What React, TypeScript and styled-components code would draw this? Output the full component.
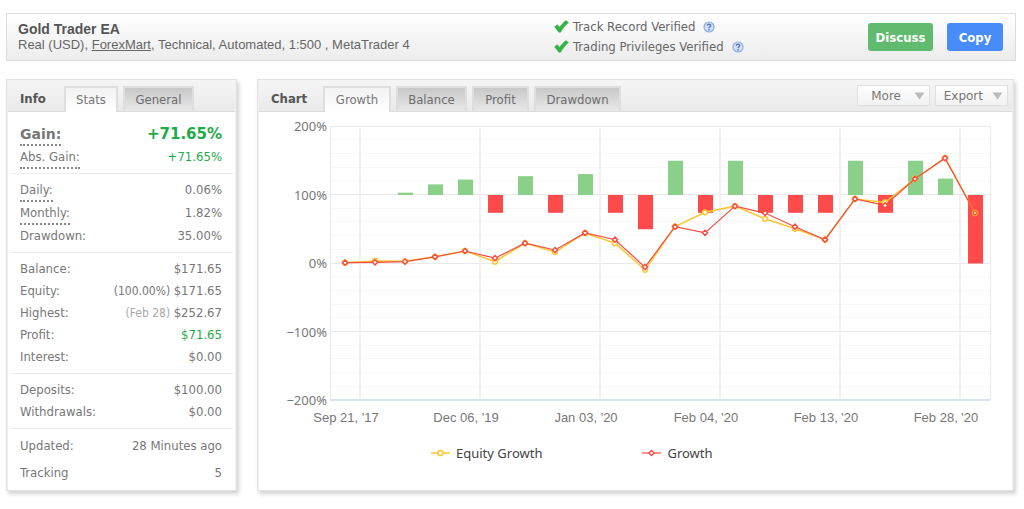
import React, { useState } from "react";
import styled, { createGlobalStyle } from "styled-components";

const UI = `"DejaVu Sans Condensed", "Noto Sans", sans-serif`;
const WIDE = `"DejaVu Sans", sans-serif`;
const ARIAL = `"Liberation Sans", Arial, sans-serif`;
const HUMANIST = `"Noto Sans", sans-serif`;

const GlobalStyle = createGlobalStyle`
  * { box-sizing: border-box; }
  body { margin: 0; background: #fff; color: #777; font: 13px/16px ${UI}; }
  button { font: inherit; color: inherit; cursor: pointer; }
  dl, dt, dd, h1, h2, p, ul { margin: 0; padding: 0; }
`;

const Page = styled.main`
  display: flex;
  flex-direction: column;
  gap: 18px;
  padding: 13px 8px 19px 6px;
`;

const Banner = styled.header`
  display: flex;
  align-items: center;
  height: 48px;
  padding: 0 12px 0 11px;
  border: 1px solid #dcdcdc;
  background: linear-gradient(#fff, #ececec);
`;

const Account = styled.div`
  flex: 1;
  color: #666;
  font: 13px/16px ${ARIAL};
`;

const AccountName = styled.h1`
  color: #555;
  font: bold 14px/16px ${ARIAL};
`;

const BrokerLink = styled.a`
  color: inherit;
`;

const Checks = styled.ul`
  width: 314px;
  list-style: none;
  color: #666;
`;

const Check = styled.li`
  display: flex;
  align-items: center;
  gap: 4px;
  height: 20px;
`;

const HelpIcon = styled.svg`
  margin-left: 4px;
`;

const Actions = styled.div`
  display: flex;
  gap: 14px;
`;

const ActionButton = styled.button<{ $color: string; $width: number }>`
  width: ${(p) => p.$width}px;
  height: 28px;
  padding: 2px 0 0;
  border: 0;
  border-radius: 3px;
  background: ${(p) => p.$color};
  color: #fff;
  font-size: 13px;
  font-weight: bold;
`;

const Columns = styled.div`
  display: grid;
  grid-template-columns: 231px minmax(0, 1fr);
  gap: 20px;
  padding-right: 2px;
`;

const Panel = styled.section`
  display: flex;
  flex-direction: column;
  padding: 0 1px;
  border: 1px solid #e2e2e2;
  background: #efefef;
  box-shadow: 2px 3px 4px rgba(0, 0, 0, 0.18);
`;

const PanelHead = styled.div`
  display: flex;
  align-items: flex-end;
  gap: 5px;
  height: 32px;
  padding-right: 4px;
  background: linear-gradient(#f5f5f5, #e9e9e9);
  box-shadow: inset 0 -1px #dcdcdc;
`;

const PanelTitle = styled.h2<{ $width: number }>`
  width: ${(p) => p.$width}px;
  padding: 0 0 5px 12px;
  color: #555;
  font: bold 13px/16px ${UI};
`;

const Tab = styled.button<{ $active: boolean; $width: number }>`
  width: ${(p) => p.$width}px;
  height: 26px;
  padding: 0;
  border: 2px solid #dedede;
  border-bottom: ${(p) => (p.$active ? 0 : 1)}px solid #dcdcdc;
  background: ${(p) => (p.$active ? "linear-gradient(#f2f2f2, #fff)" : "linear-gradient(#c8c8c8, #e8e8e8)")};
  color: ${(p) => (p.$active ? "#777" : "#6c6c6c")};
  font-size: 13px;
`;

const Tools = styled.div`
  display: flex;
  gap: 5px;
  margin-left: auto;
  padding-bottom: 6px;
`;

const ToolButton = styled.button`
  display: flex;
  align-items: center;
  justify-content: flex-end;
  gap: 13px;
  width: 73px;
  height: 21px;
  padding: 0 4px;
  border: 1px solid #e0e0e0;
  background: linear-gradient(#fff, #f1f1f1);
  font: 12px/16px ${WIDE};
`;

const ExportButton = styled(ToolButton)`
  gap: 9px;
`;

const PanelBody = styled.div`
  flex: 1;
  background: #fff;
`;

const StatGroup = styled.dl`
  margin: 0 2px;
  padding: 5px 11px 5px 10px;
  & + & { border-top: 1px solid #ececec; }
  &:first-child { padding-top: 11px; padding-bottom: 4px; }
  &:last-child { padding-top: 6px; padding-bottom: 1px; }
`;

const StatRow = styled.div<{ $tall?: boolean; $loose?: boolean }>`
  display: flex;
  justify-content: space-between;
  align-items: flex-start;
  height: ${(p) => (p.$tall ? 23 : p.$loose ? 27 : 22)}px;
  line-height: 22px;
`;

const StatLabel = styled.dt<{ $hint?: boolean; $strong?: boolean }>`
  height: ${(p) => (p.$hint ? 23 : 22)}px;
  border-bottom: ${(p) => (p.$hint ? "2px dotted #888" : "0")};
  font: ${(p) => (p.$strong ? `bold 14px/22px ${WIDE}` : `13px/22px ${UI}`)};
`;

const StatValue = styled.dd<{ $good?: boolean; $strong?: boolean }>`
  color: ${(p) => (p.$good ? "#1dab45" : "inherit")};
  font: ${(p) => (p.$strong ? `bold 15px/22px ${WIDE}` : `13px/22px ${UI}`)};
`;

const Note = styled.span<{ $faint?: boolean }>`
  color: ${(p) => (p.$faint ? "#aaa" : "inherit")};
  font-size: 12px;
`;

const ChartSvg = styled.svg`
  display: block;
  width: 100%;
  height: auto;
`;

const AxisText = styled.text`
  fill: #777;
  font: 13px ${HUMANIST};
`;

const DateText = styled.text`
  fill: #777;
  font: 13px ${ARIAL};
`;

const Legend = styled.ul`
  display: flex;
  gap: 100px;
  padding: 0 0 24px 172px;
  list-style: none;
  color: #444;
  font: 13px/20px ${HUMANIST};
`;

const LegendItem = styled.li`
  display: flex;
  align-items: center;
  gap: 6px;
`;

type Stat = {
  label: string;
  value: string;
  hint?: boolean;
  strong?: boolean;
  good?: boolean;
  loose?: boolean;
  note?: string;
  faint?: boolean;
};

const stats: Stat[][] = [
  [
    { label: "Gain:", value: "+71.65%", hint: true, strong: true, good: true },
    { label: "Abs. Gain:", value: "+71.65%", hint: true, good: true },
  ],
  [
    { label: "Daily:", value: "0.06%", hint: true },
    { label: "Monthly:", value: "1.82%", hint: true },
    { label: "Drawdown:", value: "35.00%" },
  ],
  [
    { label: "Balance:", value: "$171.65" },
    { label: "Equity:", value: "$171.65", note: "(100.00%)" },
    { label: "Highest:", value: "$252.67", note: "(Feb 28)", faint: true },
    { label: "Profit:", value: "$71.65", good: true },
    { label: "Interest:", value: "$0.00" },
  ],
  [
    { label: "Deposits:", value: "$100.00" },
    { label: "Withdrawals:", value: "$0.00" },
  ],
  [
    { label: "Updated:", value: "28 Minutes ago", loose: true },
    { label: "Tracking", value: "5", loose: true },
  ],
];

const chartTabs: [string, number][] = [["Growth", 68], ["Balance", 71], ["Profit", 57], ["Drawdown", 87]];
const infoTabs: [string, number][] = [["Stats", 54], ["General", 71]];

const growth = [0.5, 1, 2, 9, 17.5, 7, 29, 19, 44, 34, -6, 53, 44, 83, 73, 53, 34, 93.5, 84, 123, 153, 73];
const equity = [0.5, 3, 2.5, 9, 17.5, 2, 29, 16, 43.5, 29, -10, 53, 74, 83, 64.5, 50, 34, 93.5, 88.5, 123, 153.5, 73];
const change = [0, 0, 3.4, 15.5, 22.5, -26, 27.5, -26, 30.5, -26, -50, 50, -26, 50, -26, -26, -26, 50, -26, 50, 24, -100];
const dates = ["Sep 21, '17", "Dec 06, '19", "Jan 03, '20", "Feb 04, '20", "Feb 13, '20", "Feb 28, '20"];
const levels = [200, 100, 0, -100, -200];

const LEFT = 71;
const RIGHT = 731;
const TOP = 14;
const BOTTOM = 288;
const x = (i: number) => LEFT + 15 + i * 30;
const y = (v: number) => TOP + ((200 - v) * (BOTTOM - TOP)) / 400;
const line = (values: number[]) => values.map((v, i) => `${x(i)},${y(v)}`).join(" ");

function GrowthChart() {
  return (
    <ChartSvg viewBox="0 0 753 331" role="img" aria-label="Growth chart">
      {Array.from({ length: 21 }, (_, i) => (
        <path key={i} d={`M${LEFT} ${Math.floor(y(200 - i * 20)) + 0.5}H${RIGHT}`} stroke={i % 5 ? "#f7f7f7" : "#e9e9e9"} />
      ))}
      {dates.map((d, i) => (
        <path key={d} d={`M${x(i * 4) + 15} ${TOP}V${BOTTOM}`} stroke="#f1f1f1" strokeWidth="2" />
      ))}
      <path d={`M${LEFT + 0.5} ${TOP}V${BOTTOM}M${RIGHT + 0.5} ${TOP}V${BOTTOM}`} stroke="#e9e9e9" />
      <path d={`M${LEFT} ${BOTTOM}H${RIGHT}`} stroke="#dbe1ee" strokeWidth="2" />
      {change.map((c, i) => (
        <rect
          key={i}
          x={x(i) - 7}
          y={y(100 + Math.max(c, 0)) + 0.5}
          width="15"
          height={Math.abs(y(c) - y(0))}
          fill={c > 0 ? "#8bd088" : "#fd4b4b"}
        />
      ))}
      <polyline points={line(equity)} fill="none" stroke="#fdc62f" strokeWidth="1.5" />
      {equity.map((v, i) => (
        <circle key={i} cx={x(i)} cy={y(v)} r="2.4" fill="#fff" stroke="#fdc62f" strokeWidth="1.5" />
      ))}
      <polyline points={line(growth)} fill="none" stroke="#f84b40" strokeWidth="1.2" />
      {growth.map((v, i) => (
        <path
          key={i}
          d={`M${x(i)} ${y(v) - 2.6}l2.6 2.6l-2.6 2.6l-2.6-2.6z`}
          fill={i === growth.length - 1 ? "#fbe3a0" : "#fff"}
          stroke="#f84b40"
          strokeWidth="1.4"
        />
      ))}
      <circle cx={x(21)} cy={y(73)} r="2.8" fill="none" stroke="#f59a2a" strokeWidth="1" />
      {levels.map((v) => (
        <AxisText key={v} x={LEFT - 3} y={y(v) + 5} textAnchor="end">
          {v < 0 ? `−${-v}%` : `${v}%`}
        </AxisText>
      ))}
      {dates.map((d, i) => (
        <DateText key={d} x={x(i * 4) + 1} y={BOTTOM + 22} textAnchor="middle">
          {d}
        </DateText>
      ))}
    </ChartSvg>
  );
}

function Tick() {
  return (
    <svg width="15" height="14" viewBox="0 0 15 14" aria-hidden="true">
      <path d="M.6 6.800L3.200 4.800L5.600 7.200C7.600 4.600 9.800 2.200 12 .6L14.400 2.600C11.400 5.200 8.600 8.600 6.600 12.200H4.800Z" fill="#33b544" stroke="#2a9e45" strokeWidth=".5" />
    </svg>
  );
}

function Help() {
  return (
    <HelpIcon width="12" height="12" viewBox="0 0 12 12" aria-hidden="true">
      <circle cx="6" cy="6" r="5" fill="#d3e0f7" stroke="#8eaae4" strokeWidth="1.2" />
      <path d="M4.300 4.700C4.300 2.700 7.700 2.700 7.700 4.600C7.700 5.900 6 5.700 6 7.200" fill="none" stroke="#4e70c4" strokeWidth="1.300" />
      <circle cx="6" cy="8.900" r=".8" fill="#4e70c4" />
    </HelpIcon>
  );
}

function Caret() {
  return (
    <svg width="11" height="8" viewBox="0 0 11 8" aria-hidden="true">
      <path d="M.5 .5H10.500L5.500 7.500Z" fill="#bbb" />
    </svg>
  );
}

function Tabs({ tabs }: { tabs: [string, number][] }) {
  const [active, setActive] = useState(tabs[0][0]);
  return (
    <>
      {tabs.map(([name, width]) => (
        <Tab key={name} type="button" $width={width} $active={name === active} onClick={() => setActive(name)}>
          {name}
        </Tab>
      ))}
    </>
  );
}

export default function App() {
  return (
    <Page>
      <GlobalStyle />
      <Banner>
        <Account>
          <AccountName>Gold Trader EA</AccountName>
          <p>
            Real (USD), <BrokerLink href="#forexmart">ForexMart</BrokerLink>, Technical, Automated, 1:500 , MetaTrader 4
          </p>
        </Account>
        <Checks>
          <Check><Tick />Track Record Verified<Help /></Check>
          <Check><Tick />Trading Privileges Verified<Help /></Check>
        </Checks>
        <Actions>
          <ActionButton type="button" $color="#61bb6e" $width={65}>Discuss</ActionButton>
          <ActionButton type="button" $color="#488cfa" $width={56}>Copy</ActionButton>
        </Actions>
      </Banner>
      <Columns>
        <Panel>
          <PanelHead>
            <PanelTitle $width={51}>Info</PanelTitle>
            <Tabs tabs={infoTabs} />
          </PanelHead>
          <PanelBody>
            {stats.map((group, i) => (
              <StatGroup key={i}>
                {group.map((s) => (
                  <StatRow key={s.label} $tall={s.hint} $loose={s.loose}>
                    <StatLabel $hint={s.hint} $strong={s.strong}>{s.label}</StatLabel>
                    <StatValue $good={s.good} $strong={s.strong}>
                      {s.note && <Note $faint={s.faint}>{s.note} </Note>}
                      {s.value}
                    </StatValue>
                  </StatRow>
                ))}
              </StatGroup>
            ))}
          </PanelBody>
        </Panel>
        <Panel>
          <PanelHead>
            <PanelTitle $width={59}>Chart</PanelTitle>
            <Tabs tabs={chartTabs} />
            <Tools>
              <ToolButton type="button">More<Caret /></ToolButton>
              <ExportButton type="button">Export<Caret /></ExportButton>
            </Tools>
          </PanelHead>
          <PanelBody>
            <GrowthChart />
            <Legend>
              <LegendItem>
                <svg width="19" height="8" viewBox="0 0 19 8" aria-hidden="true">
                  <path d="M0 4H19" stroke="#fdc62f" strokeWidth="1.500" />
                  <circle cx="9.500" cy="4" r="2.600" fill="#fff" stroke="#fdc62f" strokeWidth="1.500" />
                </svg>
                Equity Growth
              </LegendItem>
              <LegendItem>
                <svg width="19" height="8" viewBox="0 0 19 8" aria-hidden="true">
                  <path d="M0 4H19" stroke="#f84b40" strokeWidth="1.200" />
                  <path d="M9.500 1.400l2.600 2.600l-2.600 2.600l-2.600-2.600z" fill="#fff" stroke="#f84b40" strokeWidth="1.400" />
                </svg>
                Growth
              </LegendItem>
            </Legend>
          </PanelBody>
        </Panel>
      </Columns>
    </Page>
  );
}
